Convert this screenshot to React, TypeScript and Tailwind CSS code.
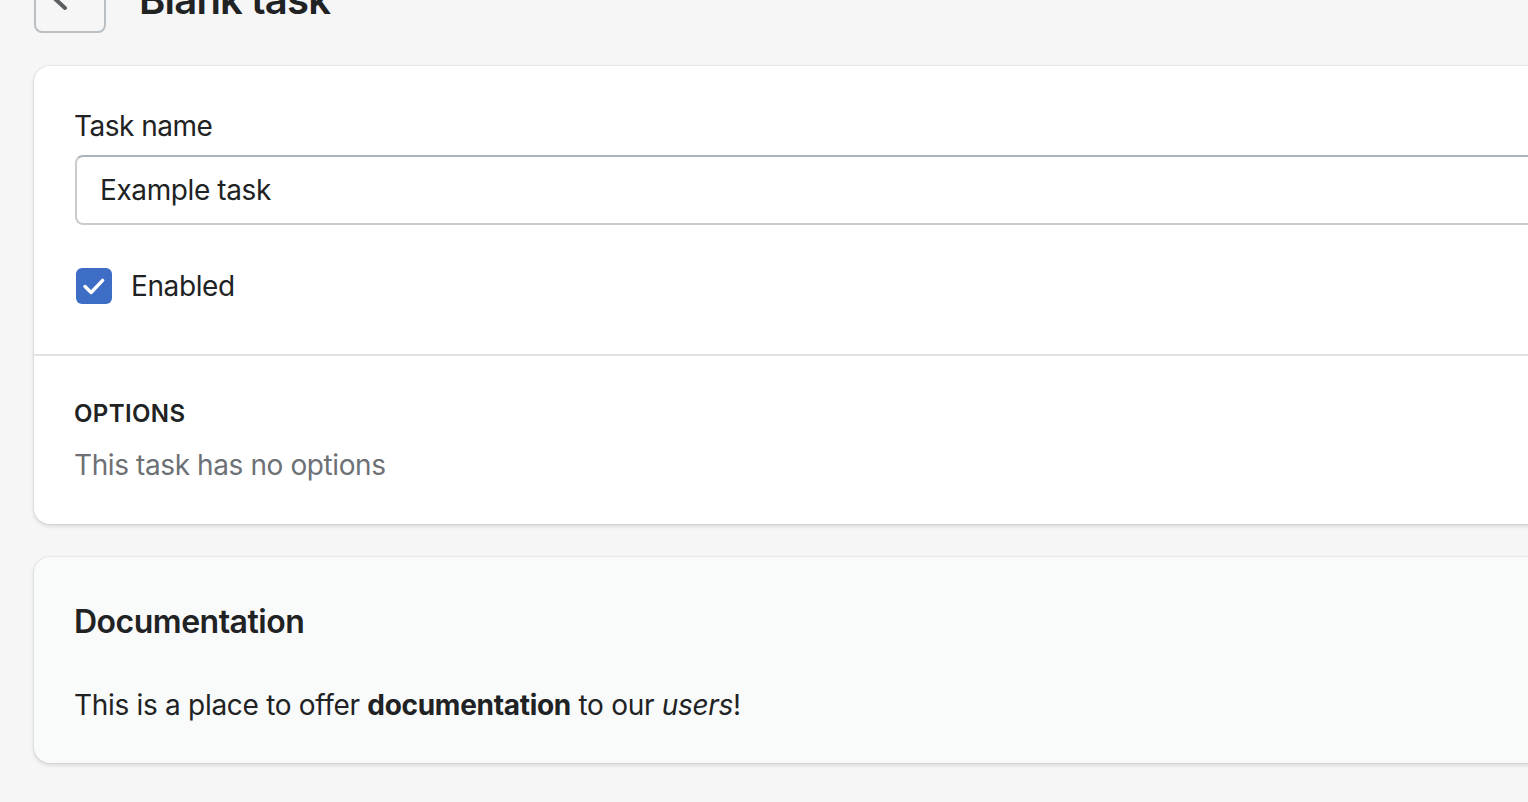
import React from "react";

export default function App() {
  return (
    <div
      className="w-[1528px] h-[802px] overflow-hidden bg-[#f6f6f7] text-[#202223]"
      style={{ fontFamily: "Inter, 'Noto Sans', sans-serif" }}
    >
      <div className="w-[1700px] pl-[34px] -mt-[39px]">
        {/* Header */}
        <div className="flex items-center h-[72px]">
          <button className="w-[72px] h-[72px] rounded-[8px] border-2 border-[#babfc3] flex items-center justify-center">
            <svg width="40" height="40" viewBox="0 0 40 40" fill="none">
              <path d="M38 20 H3 M15 8.5 L3 20 L15 31" stroke="#5c5f62" strokeWidth="4" strokeLinecap="round" strokeLinejoin="round" />
            </svg>
          </button>
          <h1 className="ml-[33px] text-[40px] leading-[48px] font-semibold tracking-[-0.8px] mt-[6px]">Blank task</h1>
        </div>

        {/* Card 1 */}
        <div className="mt-[33px] bg-white rounded-[16px] shadow-[0_0_0_1px_rgba(63,63,68,0.05),0_2px_4px_rgba(63,63,68,0.18)]">
          <div className="px-[40px] pt-[40px] pb-[48px]">
            <label className="block text-[28px] leading-[40px] tracking-[-0.5px]">Task name</label>
            <div className="mt-[9px] ml-[1px] h-[70px] rounded-[8px] border-2 border-[#c9cccf] border-t-[#aeb4b9] flex items-center pl-[23px] text-[28px] tracking-[-0.4px]">
              Example task
            </div>
            <div className="mt-[41px] h-[40px] flex items-center">
              <div className="w-[36px] h-[36px] ml-[2px] rounded-[6px] bg-[#3e6dc6] flex items-center justify-center">
                <svg width="36" height="36" viewBox="0 0 20 20" fill="none">
                  <path d="M5 10.3 L8.4 13.6 L14.8 6.9" stroke="white" strokeWidth="1.9" strokeLinecap="round" strokeLinejoin="round" />
                </svg>
              </div>
              <span className="ml-[19px] text-[28px] leading-[40px] tracking-[-0.4px]">Enabled</span>
            </div>
          </div>
          <div className="border-t-2 border-[#e1e3e5] px-[40px] pt-[42px] pb-[39px]">
            <h2 className="text-[24px] leading-[32px] font-semibold uppercase tracking-[0.4px]">Options</h2>
            <p className="mt-[15px] text-[28px] leading-[40px] text-[#6d7175] tracking-[-0.4px]">This task has no options</p>
          </div>
        </div>

        {/* Card 2 */}
        <div className="mt-[33px] bg-[#f9fafa] rounded-[16px] shadow-[0_0_0_1px_rgba(63,63,68,0.05),0_2px_4px_rgba(63,63,68,0.18)] px-[40px] pt-[41px] pb-[38px]">
          <h2 className="text-[32px] leading-[48px] font-semibold tracking-[-0.5px]">Documentation</h2>
          <p className="mt-[39px] text-[28px] leading-[40px] tracking-[-0.3px]">
            This is a place to offer <strong className="font-bold">documentation</strong> to our <em>users</em>!
          </p>
        </div>
      </div>
    </div>
  );
}
